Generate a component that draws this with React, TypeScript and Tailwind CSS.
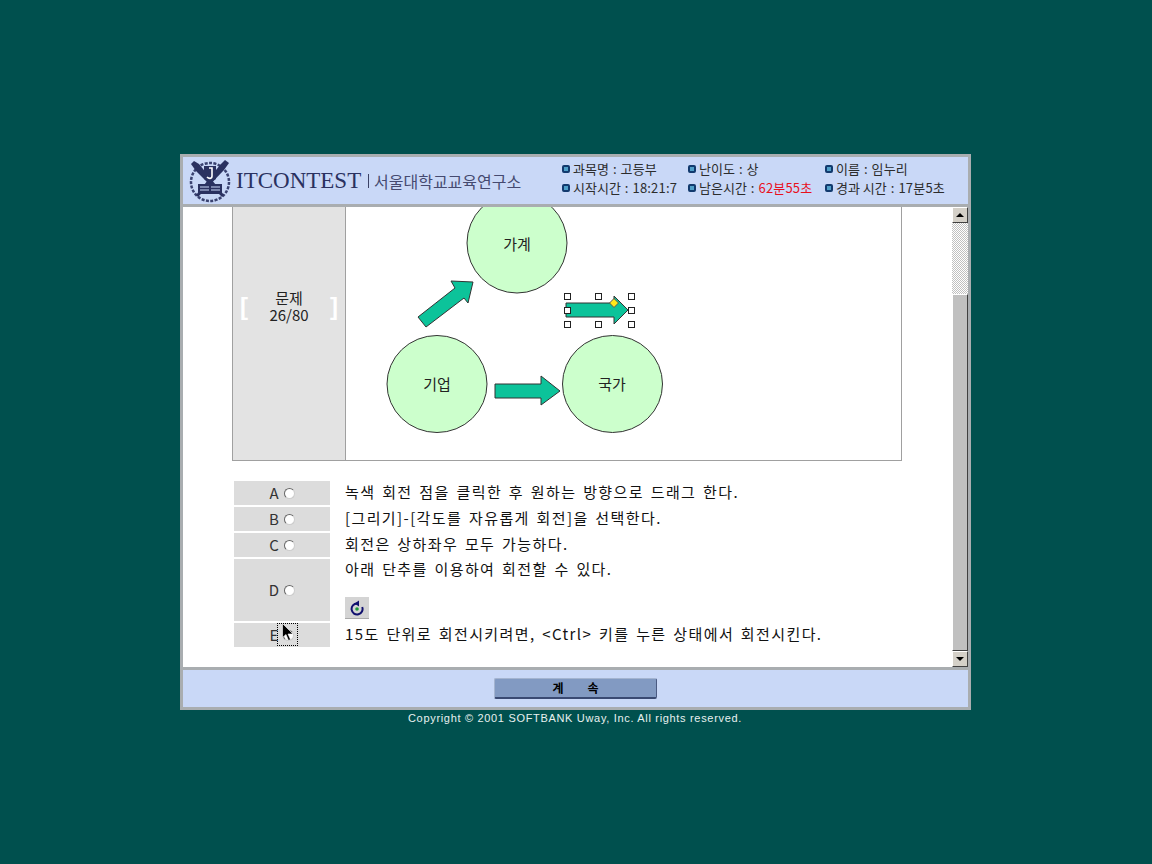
import React from 'react';

const KR = "font-['Noto_Sans_CJK_KR','Noto_Sans',sans-serif]";

function Bullet() {
  return <span className="inline-block w-[8px] h-[8px] mr-[3px] rounded-[2px] border-2 border-[#123a6e] bg-[#4f9fc8] shrink-0" />;
}

function InfoCell({ label, value, red }: { label: string; value: string; red?: boolean }) {
  return (
    <div className="flex items-center h-[19px] whitespace-nowrap text-[13px] text-[#2c2c2c]">
      <Bullet />
      <span>{label}</span>
      <span className="mx-[4px]">:</span>
      <span className={red ? 'text-[#e8101c] tracking-[0.2px]' : 'tracking-[0.2px]'}>{value}</span>
    </div>
  );
}

function Crest() {
  return (
    <svg width="44" height="44" viewBox="0 0 44 44" className="shrink-0">
      <circle cx="22" cy="23" r="19" fill="none" stroke="#3a4270" strokeWidth="2.500" strokeDasharray="3 1.400" />
      <path d="M3 5l3-3 5 3 25 31-2 2L8 12z" fill="#2a3160" />
      <path d="M41 4l-4-3-5 5L8 36l2 2L36 11z" fill="#2a3160" />
      <path d="M16 7h12v13l-6 4-6-4z" fill="#2a3160" />
      <path d="M21 9h3v8c0 3-3 3-5 1" fill="none" stroke="#fff" strokeWidth="1.600" />
      <rect x="10" y="25" width="24" height="10" fill="#2a3160" />
      <path d="M12 28h9M23 28h9M12 31h9M23 31h9" stroke="#c9d8f7" strokeWidth="1" />
    </svg>
  );
}

function Diagram() {
  const arrow = '#0cc39a';
  const label = 'text-[15px] fill-[#222]';
  return (
    <svg width="555" height="253" viewBox="346 207 555 253" className="block">
      <g fill="#ccffcc" stroke="#333" strokeWidth="1">
        <circle cx="517" cy="243" r="50" />
        <ellipse cx="437" cy="384" rx="50" ry="48.500" />
        <ellipse cx="612.500" cy="384" rx="50" ry="48.500" />
      </g>
      <text x="517" y="250" textAnchor="middle" className={label}>가계</text>
      <text x="437" y="390" textAnchor="middle" className={label}>기업</text>
      <text x="612" y="390" textAnchor="middle" className={label}>국가</text>
      <g fill={arrow} stroke="#333" strokeWidth="1">
        <path d="M418 317L455 288l-4-7 22 1-5 21-4-5-38 29z" />
        <path d="M495 384h46v-8l19 15-19 14v-7h-46z" />
        <path d="M566 303h48v-7l14 14-14 14v-7h-48z" />
      </g>
      <path d="M614 298.500l4.500 4.500-4.500 4.500-4.500-4.500z" fill="#ffe81a" stroke="#555" strokeWidth="1" />
      <g fill="#fff" stroke="#222" strokeWidth="1">
        {[
          [564, 293], [595, 293], [628, 293],
          [564, 307], [628, 307],
          [564, 321], [595, 321], [628, 321],
        ].map(([x, y]) => (
          <rect key={`${x}-${y}`} x={x + 0.5} y={y + 0.5} width="6" height="6" />
        ))}
      </g>
    </svg>
  );
}

function RotateIcon() {
  return (
    <svg width="16" height="16" viewBox="0 0 16 16">
      <path d="M8 3.500A5.500 5.500 0 1 0 13.200 7" fill="none" stroke="#10106e" strokeWidth="2" />
      <path d="M5.500 3.500L10 0.500v6z" fill="#10106e" />
      <circle cx="8" cy="9" r="1.800" fill="#1c9c3a" />
    </svg>
  );
}

function Radio() {
  return <span className="inline-block w-[11px] h-[11px] ml-[5px] rounded-full bg-white border border-[#666] border-b-[#ccc] border-r-[#ccc]" />;
}

const options = [
  { key: 'A', h: 'h-[24px]', text: '녹색 회전 점을 클릭한 후 원하는 방향으로 드래그 한다.' },
  { key: 'B', h: 'h-[24px]', text: '[그리기]-[각도를 자유롭게 회전]을 선택한다.' },
  { key: 'C', h: 'h-[24px]', text: '회전은 상하좌우 모두 가능하다.' },
  { key: 'D', h: 'h-[62px]', text: '아래 단추를 이용하여 회전할 수 있다.' },
  { key: 'E', h: 'h-[24px]', text: '15도 단위로 회전시키려면, <Ctrl> 키를 누른 상태에서 회전시킨다.' },
];

function Scrollbar() {
  const btn = 'w-[16px] h-[16px] flex items-center justify-center bg-[#d4d0c8] border border-t-white border-l-white border-r-[#404040] border-b-[#404040] shrink-0';
  return (
    <div className="w-[16px] flex flex-col shrink-0">
      <div className={btn}><span className="w-0 h-0 border-x-[4px] border-x-transparent border-b-[4px] border-b-black" /></div>
      <div className="h-[71px] bg-[repeating-conic-gradient(#c0c0c0_0%_25%,#ffffff_0%_50%)] bg-[length:2px_2px]" />
      <div className="flex-1 bg-[#c0c0c0] border border-t-white border-l-white border-r-[#404040] border-b-[#404040]" />
      <div className={btn}><span className="w-0 h-0 border-x-[4px] border-x-transparent border-t-[4px] border-t-black" /></div>
    </div>
  );
}

export default function App() {
  return (
    <div className={`relative w-[1152px] h-[864px] overflow-hidden bg-[#00504e] pt-[154px] pl-[180px] ${KR}`}>
      <div className="w-[791px] h-[556px] border-[3px] border-[#a9adb0] flex flex-col bg-white">
        {/* header */}
        <div className="h-[47px] flex items-center bg-[#c9d8f7] shrink-0">
          <div className="ml-[5px] mr-[4px]"><Crest /></div>
          <span className="font-['Liberation_Serif',serif] text-[23px] leading-none text-[#2a3160] w-[127px] whitespace-nowrap">ITCONTEST</span>
          <span className="w-px h-[14px] bg-[#3c4266] ml-[5px] mr-[5px]" />
          <span className="text-[16px] leading-none text-[#454a70] w-[152px] whitespace-nowrap">서울대학교교육연구소</span>
          <div className="ml-[36px] pb-[4px] grid grid-cols-[126px_137px_auto] content-center">
            <InfoCell label="과목명" value="고등부" />
            <InfoCell label="난이도" value="상" />
            <InfoCell label="이름" value="임누리" />
            <InfoCell label="시작시간" value="18:21:7" />
            <InfoCell label="남은시간" value="62분55초" red />
            <InfoCell label="경과 시간" value="17분5초" />
          </div>
        </div>

        {/* scroll area */}
        <div className="h-[466px] flex border-t-[3px] border-b-[3px] border-[#a9adb0] shrink-0">
          <div className="flex-1 pl-[49px] pt-0 overflow-hidden">
            <div className="w-[670px] flex border-l border-r border-b border-[#a0a0a0]">
              <div className="w-[113px] h-[253px] bg-[#e3e3e3] border-r border-[#a0a0a0] flex items-start justify-between pl-[7px] pr-[7px] pt-[82px] shrink-0">
                <span className="mt-[6px] text-[24px] font-black text-white leading-none font-['Liberation_Sans',sans-serif]">[</span>
                <div className="text-center text-[15px] leading-[17px] text-[#222]">
                  <div>문제</div>
                  <div>26/80</div>
                </div>
                <span className="mt-[6px] text-[24px] font-black text-white leading-none font-['Liberation_Sans',sans-serif]">]</span>
              </div>
              <Diagram />
            </div>
            <div className="mt-[20px] ml-[2px] flex flex-col gap-[2px]">
              {options.map(o => (
                <div key={o.key} className="flex">
                  <div className={`w-[96px] ${o.h} bg-[#dcdcdc] flex items-center justify-center text-[15px] text-[#333] shrink-0`}>
                    {o.key}
                    <Radio />
                  </div>
                  <div className={`ml-[15px] text-[15px] leading-[22px] tracking-[1.4px] [word-spacing:2px] text-[#111] whitespace-nowrap ${o.key === 'D' ? '-mt-[1px]' : ''}`}>
                    <div>{o.text}</div>
                    {o.key === 'D' && (
                      <div className="mt-[17px] w-[24px] h-[22px] bg-[#d4d4d4] border-b border-[#aaa] flex items-center justify-center">
                        <RotateIcon />
                      </div>
                    )}
                  </div>
                </div>
              ))}
            </div>
          </div>
          <Scrollbar />
        </div>

        {/* footer */}
        <div className="flex-1 bg-[#c9d8f7] flex items-center justify-center">
          <div className="w-[163px] h-[21px] rounded-[2px] bg-[#829ac2] border border-[#a4b4d0] border-b-2 border-b-[#3a4a72] border-r-[#4a5a82] flex items-center justify-center gap-[24px] text-[12px] font-bold text-black">
            <span>계</span>
            <span>속</span>
          </div>
        </div>
      </div>

      <div className="ml-[228px] mt-[2px] text-[11px] leading-[13px] tracking-[0.68px] text-[#e8f0f0] font-['Liberation_Sans',sans-serif] whitespace-nowrap">
        Copyright © 2001 SOFTBANK Uway, Inc. All rights reserved.
      </div>

      {/* focus box and mouse pointer over option E */}
      <div className="absolute left-[277px] top-[623px] w-[21px] h-[23px] border border-dotted border-black" />
      <svg className="absolute left-[282px] top-[623px]" width="12" height="19" viewBox="0 0 12 19">
        <path d="M0.500 0.500v14l3.500-3 2.500 6 2-1-2.500-5.500h5z" fill="#000" stroke="#fff" strokeWidth="0.600" />
      </svg>
    </div>
  );
}
